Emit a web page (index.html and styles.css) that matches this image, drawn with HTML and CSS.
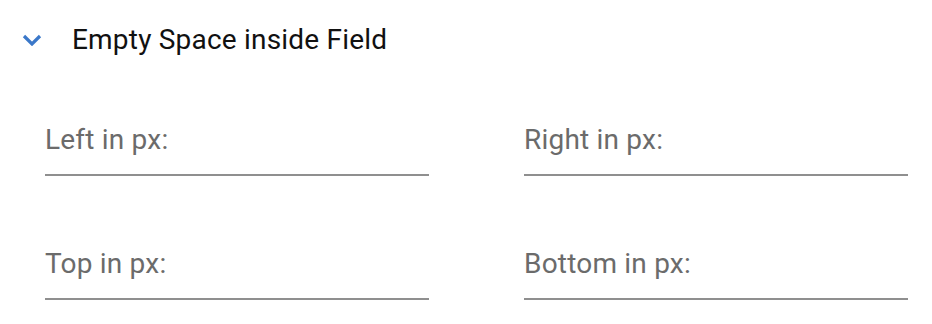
FILE: index.html
```html
<!DOCTYPE html>
<html>
<head>
<meta charset="utf-8">
<link rel="stylesheet" href="styles.css">
</head>
<body>
<section class="panel">
  <div class="panel-header">
    <svg class="chevron" width="20" height="12" viewBox="0 0 20 12"><path d="M2 2 L10 10 L18 2" fill="none" stroke="#3b78c9" stroke-width="3.2"/></svg>
    <span class="panel-title">Empty Space inside Field</span>
  </div>
  <div class="fields">
    <label class="field"><span class="field-label">Left in px:</span><span class="field-line"></span></label>
    <label class="field"><span class="field-label">Right in px:</span><span class="field-line"></span></label>
    <label class="field"><span class="field-label">Top in px:</span><span class="field-line"></span></label>
    <label class="field"><span class="field-label">Bottom in px:</span><span class="field-line"></span></label>
  </div>
</section>
</body>
</html>
```
FILE: styles.css
```css
html, body { margin: 0; padding: 0; background: #fff; }
body { font-family: Roboto, "Liberation Sans", sans-serif; }
.panel { width: 932px; }
.panel-header {
  display: flex;
  align-items: center;
  height: 80px;
  padding-left: 22px;
}
.chevron { display: block; margin-right: 30px; }
.panel-title { font-size: 28px; color: #111; line-height: 30px; letter-spacing: 0.2px; }
.fields {
  display: grid;
  grid-template-columns: 384px 384px;
  column-gap: 95px;
  row-gap: 0;
  padding-left: 45px;
}
.field { display: flex; flex-direction: column; height: 124px; padding-top: 44px; box-sizing: border-box; }
.field-label { font-size: 28px; color: #6b6b6b; line-height: 32px; letter-spacing: 0.2px; }
.field-line { display: block; height: 2px; background: #8f8f8f; margin-top: 18px; }
```
